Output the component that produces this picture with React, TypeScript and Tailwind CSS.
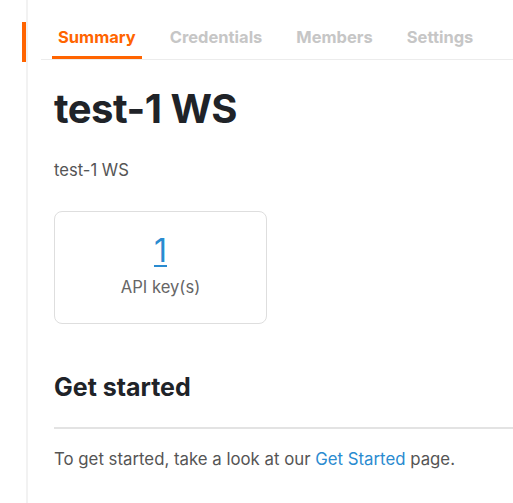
import React from 'react';

const tabs = ['Summary', 'Credentials', 'Members', 'Settings'];

export default function App() {
  return (
    <div className="flex h-[503px] w-full bg-white font-['Inter',sans-serif]">
      {/* left rail with active marker */}
      <div className="w-[22px] shrink-0" />
      <div className="w-[4px] shrink-0">
        <div className="mt-[22px] h-[40px] w-[4px] bg-[#ff6400]" />
      </div>
      <main className="flex-1 border-l-2 border-[#f2f2f2]">
        <nav className="ml-[13px] flex gap-[22px] border-b border-[#ececec] pl-[11px] pt-[27px]">
          {tabs.map((t, i) => (
            <div
              key={t}
              className={
                i === 0
                  ? 'border-b-[3px] border-[#ff6400] px-[6px] pb-[9px] text-[16.5px] leading-[20px] font-bold text-[#ff6400]'
                  : 'border-b-[3px] border-transparent px-[6px] pb-[9px] text-[16.5px] leading-[20px] font-bold text-[#c6c6c6]'
              }
            >
              {t}
            </div>
          ))}
        </nav>

        <div className="pl-[26px]">
          <h1 className="mt-[25px] text-[40px] leading-[48px] font-bold tracking-[-0.5px] text-[#202328]">test-1 WS</h1>
          <p className="mt-[27px] text-[16.6px] leading-[20px] text-[#555]">test-1 WS</p>

          <div className="mt-[31px] flex h-[113px] w-[213px] flex-col items-center rounded-[8px] border border-[#dedede] pt-[19px]">
            <a className="text-[32px] leading-[40px] text-[#2a8bd0] underline decoration-2 underline-offset-[3px]">1</a>
            <span className="mt-[4px] text-[16.6px] leading-[24px] text-[#666]">API key(s)</span>
          </div>

          <h2 className="mt-[47px] text-[25px] leading-[32px] font-bold text-[#202328]">Get started</h2>
          <div className="mt-[24px] h-[2px] bg-[#e3e3e3]" />
          <p className="mt-[18px] text-[16.8px] leading-[24px] text-[#555]">
            To get started, take a look at our <a className="text-[#2a8bd0]">Get Started</a> page.
          </p>
        </div>
      </main>
    </div>
  );
}
